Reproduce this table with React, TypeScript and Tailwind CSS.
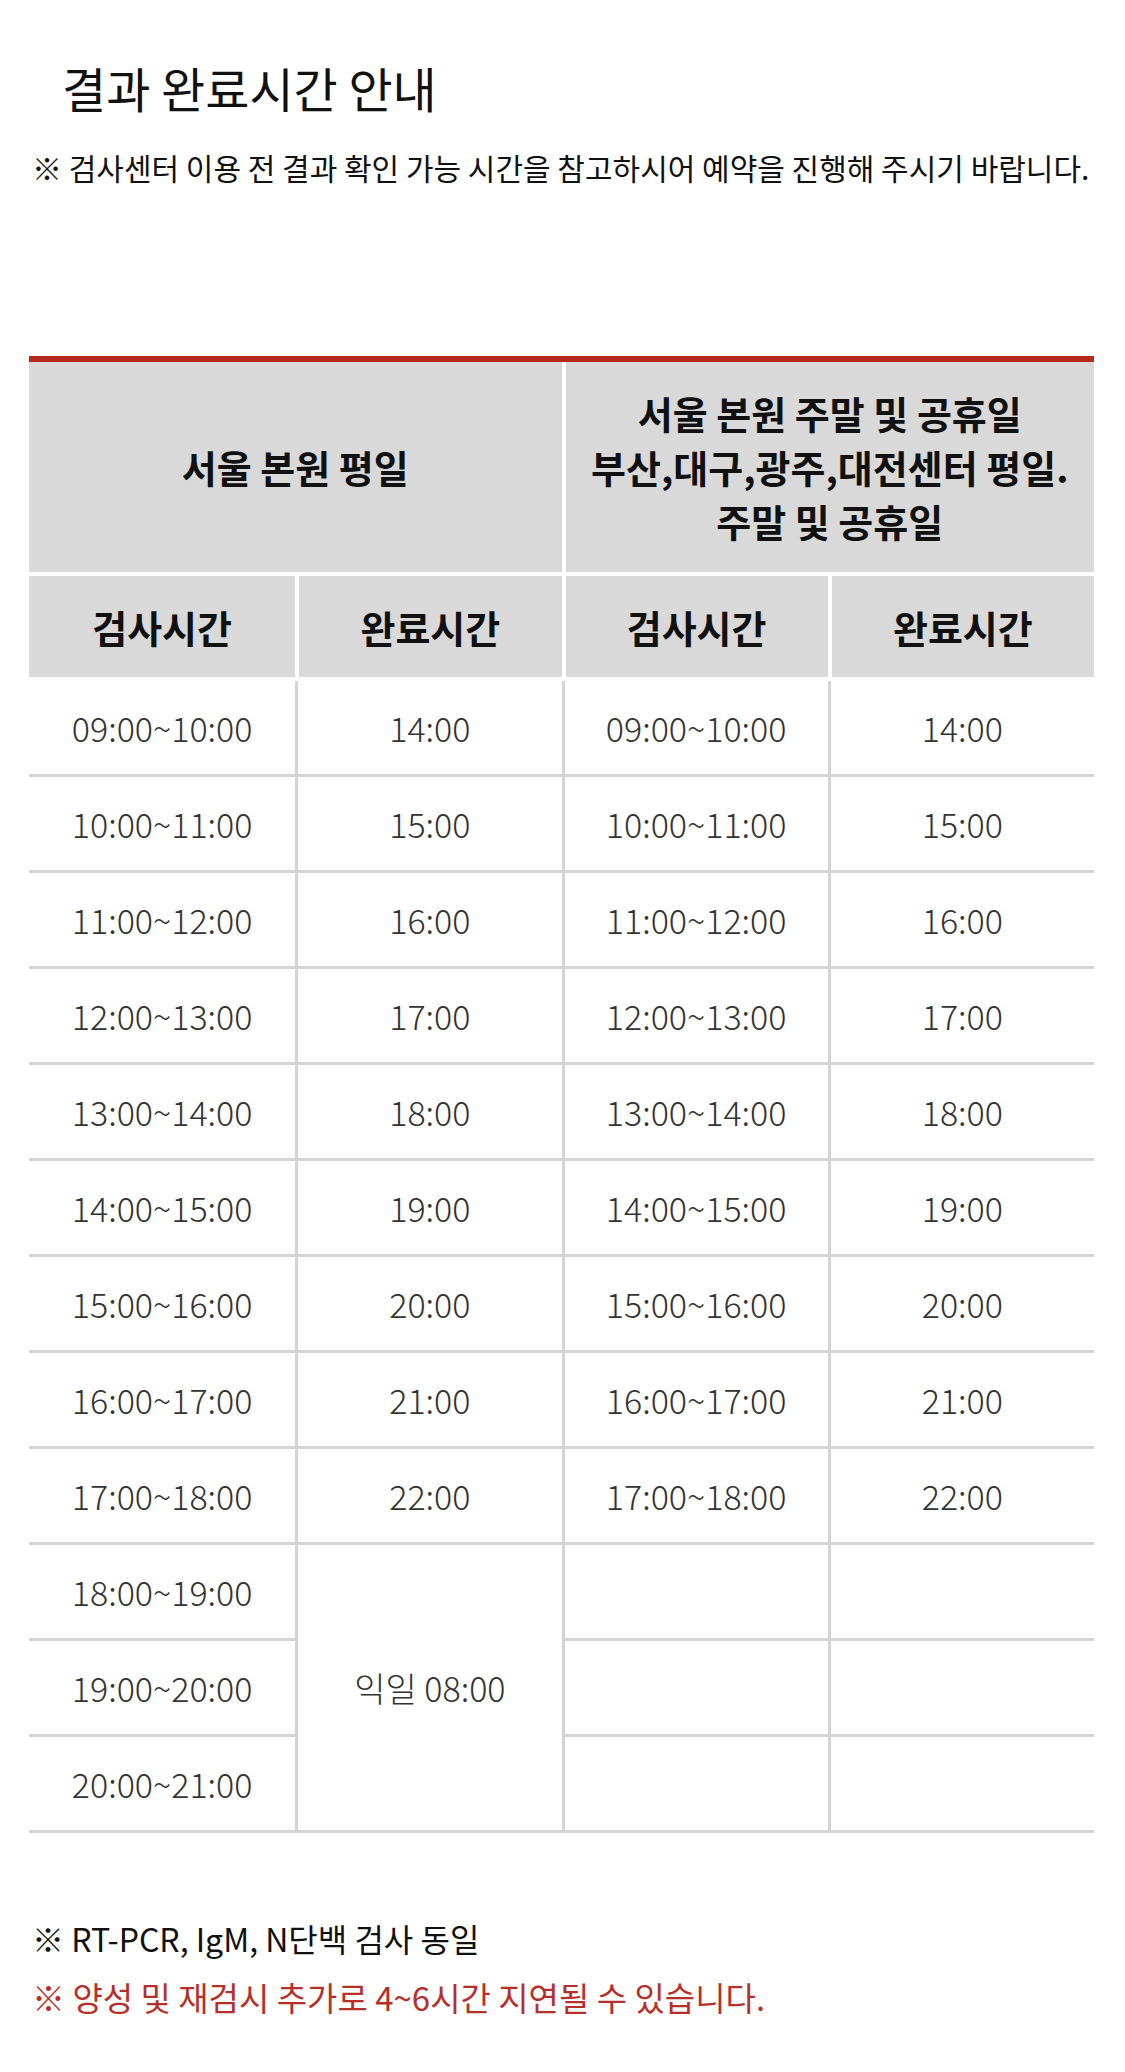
import * as React from "react";

const rows: [string, string | null, string, string][] = [
  ["09:00~10:00", "14:00", "09:00~10:00", "14:00"],
  ["10:00~11:00", "15:00", "10:00~11:00", "15:00"],
  ["11:00~12:00", "16:00", "11:00~12:00", "16:00"],
  ["12:00~13:00", "17:00", "12:00~13:00", "17:00"],
  ["13:00~14:00", "18:00", "13:00~14:00", "18:00"],
  ["14:00~15:00", "19:00", "14:00~15:00", "19:00"],
  ["15:00~16:00", "20:00", "15:00~16:00", "20:00"],
  ["16:00~17:00", "21:00", "16:00~17:00", "21:00"],
  ["17:00~18:00", "22:00", "17:00~18:00", "22:00"],
  ["18:00~19:00", "익일 08:00", "", ""],
  ["19:00~20:00", null, "", ""],
  ["20:00~21:00", null, "", ""],
];

const td = "h-[96px] border-b-[3px] border-[#d4d4d4] text-center align-middle";

export default function App() {
  return (
    <div
      className="w-[1125px] min-h-[2072px] bg-white text-[#111]"
      style={{ fontFamily: '"Noto Sans CJK KR", "Noto Sans", sans-serif' }}
    >
      <div className="px-[29px] pt-[56px]">
        <h1 className="pl-[33px] text-[48px] leading-[62px] font-normal">
          결과 완료시간 안내
        </h1>
        <p className="mt-[28px] pl-[3px] text-[30px] leading-[42px] whitespace-nowrap">
          ※ 검사센터 이용 전 결과 확인 가능 시간을 참고하시어 예약을 진행해 주시기 바랍니다.
        </p>

        <table className="mt-[168px] w-[1065px] table-fixed border-separate border-spacing-0 border-t-[6px] border-[#b8271f]">
          <thead>
            <tr>
              <th
                colSpan={2}
                className="h-[214px] bg-[#d9d9d9] border-b-[4px] border-white text-[38px] font-bold leading-[54px]"
              >
                서울 본원 평일
              </th>
              <th
                colSpan={2}
                className="h-[214px] bg-[#d9d9d9] border-b-[4px] border-l-[4px] border-white text-[38px] font-bold leading-[54px]"
              >
                서울 본원 주말 및 공휴일
                <br />
                부산,대구,광주,대전센터 평일.
                <br />
                주말 및 공휴일
              </th>
            </tr>
            <tr>
              {["검사시간", "완료시간", "검사시간", "완료시간"].map((h, i) => (
                <th
                  key={i}
                  className={`h-[105px] bg-[#d9d9d9] border-b-[4px] border-white text-[38px] font-bold ${
                    i > 0 ? "border-l-[4px]" : ""
                  }`}
                >
                  {h}
                </th>
              ))}
            </tr>
          </thead>
          <tbody className="text-[34px] font-light text-[#333]">
            {rows.map((r, i) => (
              <tr key={i}>
                <td className={td}>{r[0]}</td>
                {r[1] !== null && (
                  <td
                    rowSpan={r[1] === "익일 08:00" ? 3 : 1}
                    className={`${td} border-l-[3px]`}
                  >
                    {r[1]}
                  </td>
                )}
                <td className={`${td} border-l-[3px]`}>{r[2]}</td>
                <td className={`${td} border-l-[3px]`}>{r[3]}</td>
              </tr>
            ))}
          </tbody>
        </table>

        <div className="mt-[76px] pl-[3px] leading-[59px]">
          <p className="text-[32px]">※ RT-PCR, IgM, N단백 검사 동일</p>
          <p className="text-[33px] text-[#b5302a]">
            ※ 양성 및 재검시 추가로 4~6시간 지연될 수 있습니다.
          </p>
        </div>
      </div>
    </div>
  );
}
